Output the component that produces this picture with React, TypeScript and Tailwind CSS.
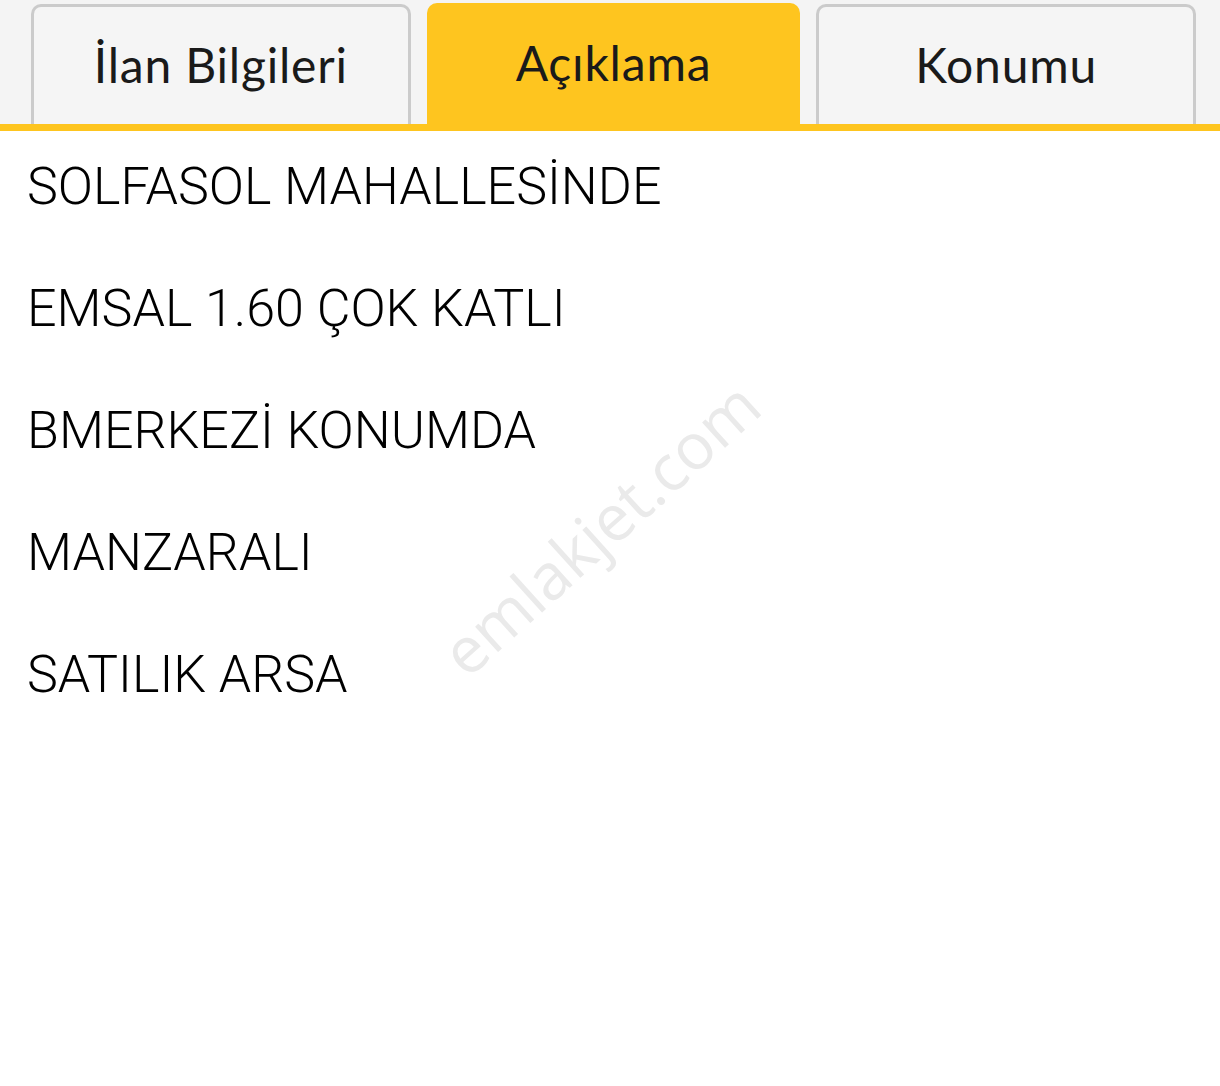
import React from 'react';

const tabs = ['İlan Bilgileri', 'Açıklama', 'Konumu'];

const lines = [
  'SOLFASOL MAHALLESİNDE',
  'EMSAL 1.60 ÇOK KATLI',
  'BMERKEZİ KONUMDA',
  'MANZARALI',
  'SATILIK ARSA',
];

export default function App() {
  const active = 1;

  return (
    <div className="relative w-[1220px] h-[1086px] bg-white overflow-hidden">
      {/* tab bar */}
      <div className="bg-[#f4f4f4] pt-[3px]">
        <div className="flex gap-[16px] pl-[31px] pr-[24px] h-[121px] items-end">
          {tabs.map((t, i) => (
            <div
              key={t}
              className={
                i === active
                  ? 'flex-1 h-[121px] rounded-t-[10px] bg-[#fec51f] flex items-center justify-center'
                  : 'flex-1 h-[120px] rounded-t-[10px] bg-[#f5f5f5] border-[3px] border-b-0 border-[#cbcbcb] flex items-center justify-center'
              }
            >
              <span
                className="text-[48px] text-[#1a1a1a] leading-none pb-[2px] tracking-[0.8px]"
                style={{ fontFamily: 'Lato, "Noto Sans", sans-serif' }}
              >
                {t}
              </span>
            </div>
          ))}
        </div>
        <div className="h-[7px] bg-[#fec51f]" />
      </div>

      {/* description */}
      <div
        className="px-[27px] pt-[29px] flex flex-col gap-[68px] text-[52px] leading-[54px] text-black font-light"
        style={{ fontFamily: 'Roboto, "Liberation Sans", sans-serif' }}
      >
        {lines.map((l) => (
          <div key={l}>{l}</div>
        ))}
      </div>

      {/* watermark */}
      <div
        className="absolute left-[600px] top-[528px] -translate-x-1/2 -translate-y-1/2 -rotate-[42deg] text-[64px] text-[#eaeaea] whitespace-nowrap pointer-events-none"
        style={{ fontFamily: '"Open Sans", sans-serif' }}
      >
        emlakjet.com
      </div>
    </div>
  );
}
